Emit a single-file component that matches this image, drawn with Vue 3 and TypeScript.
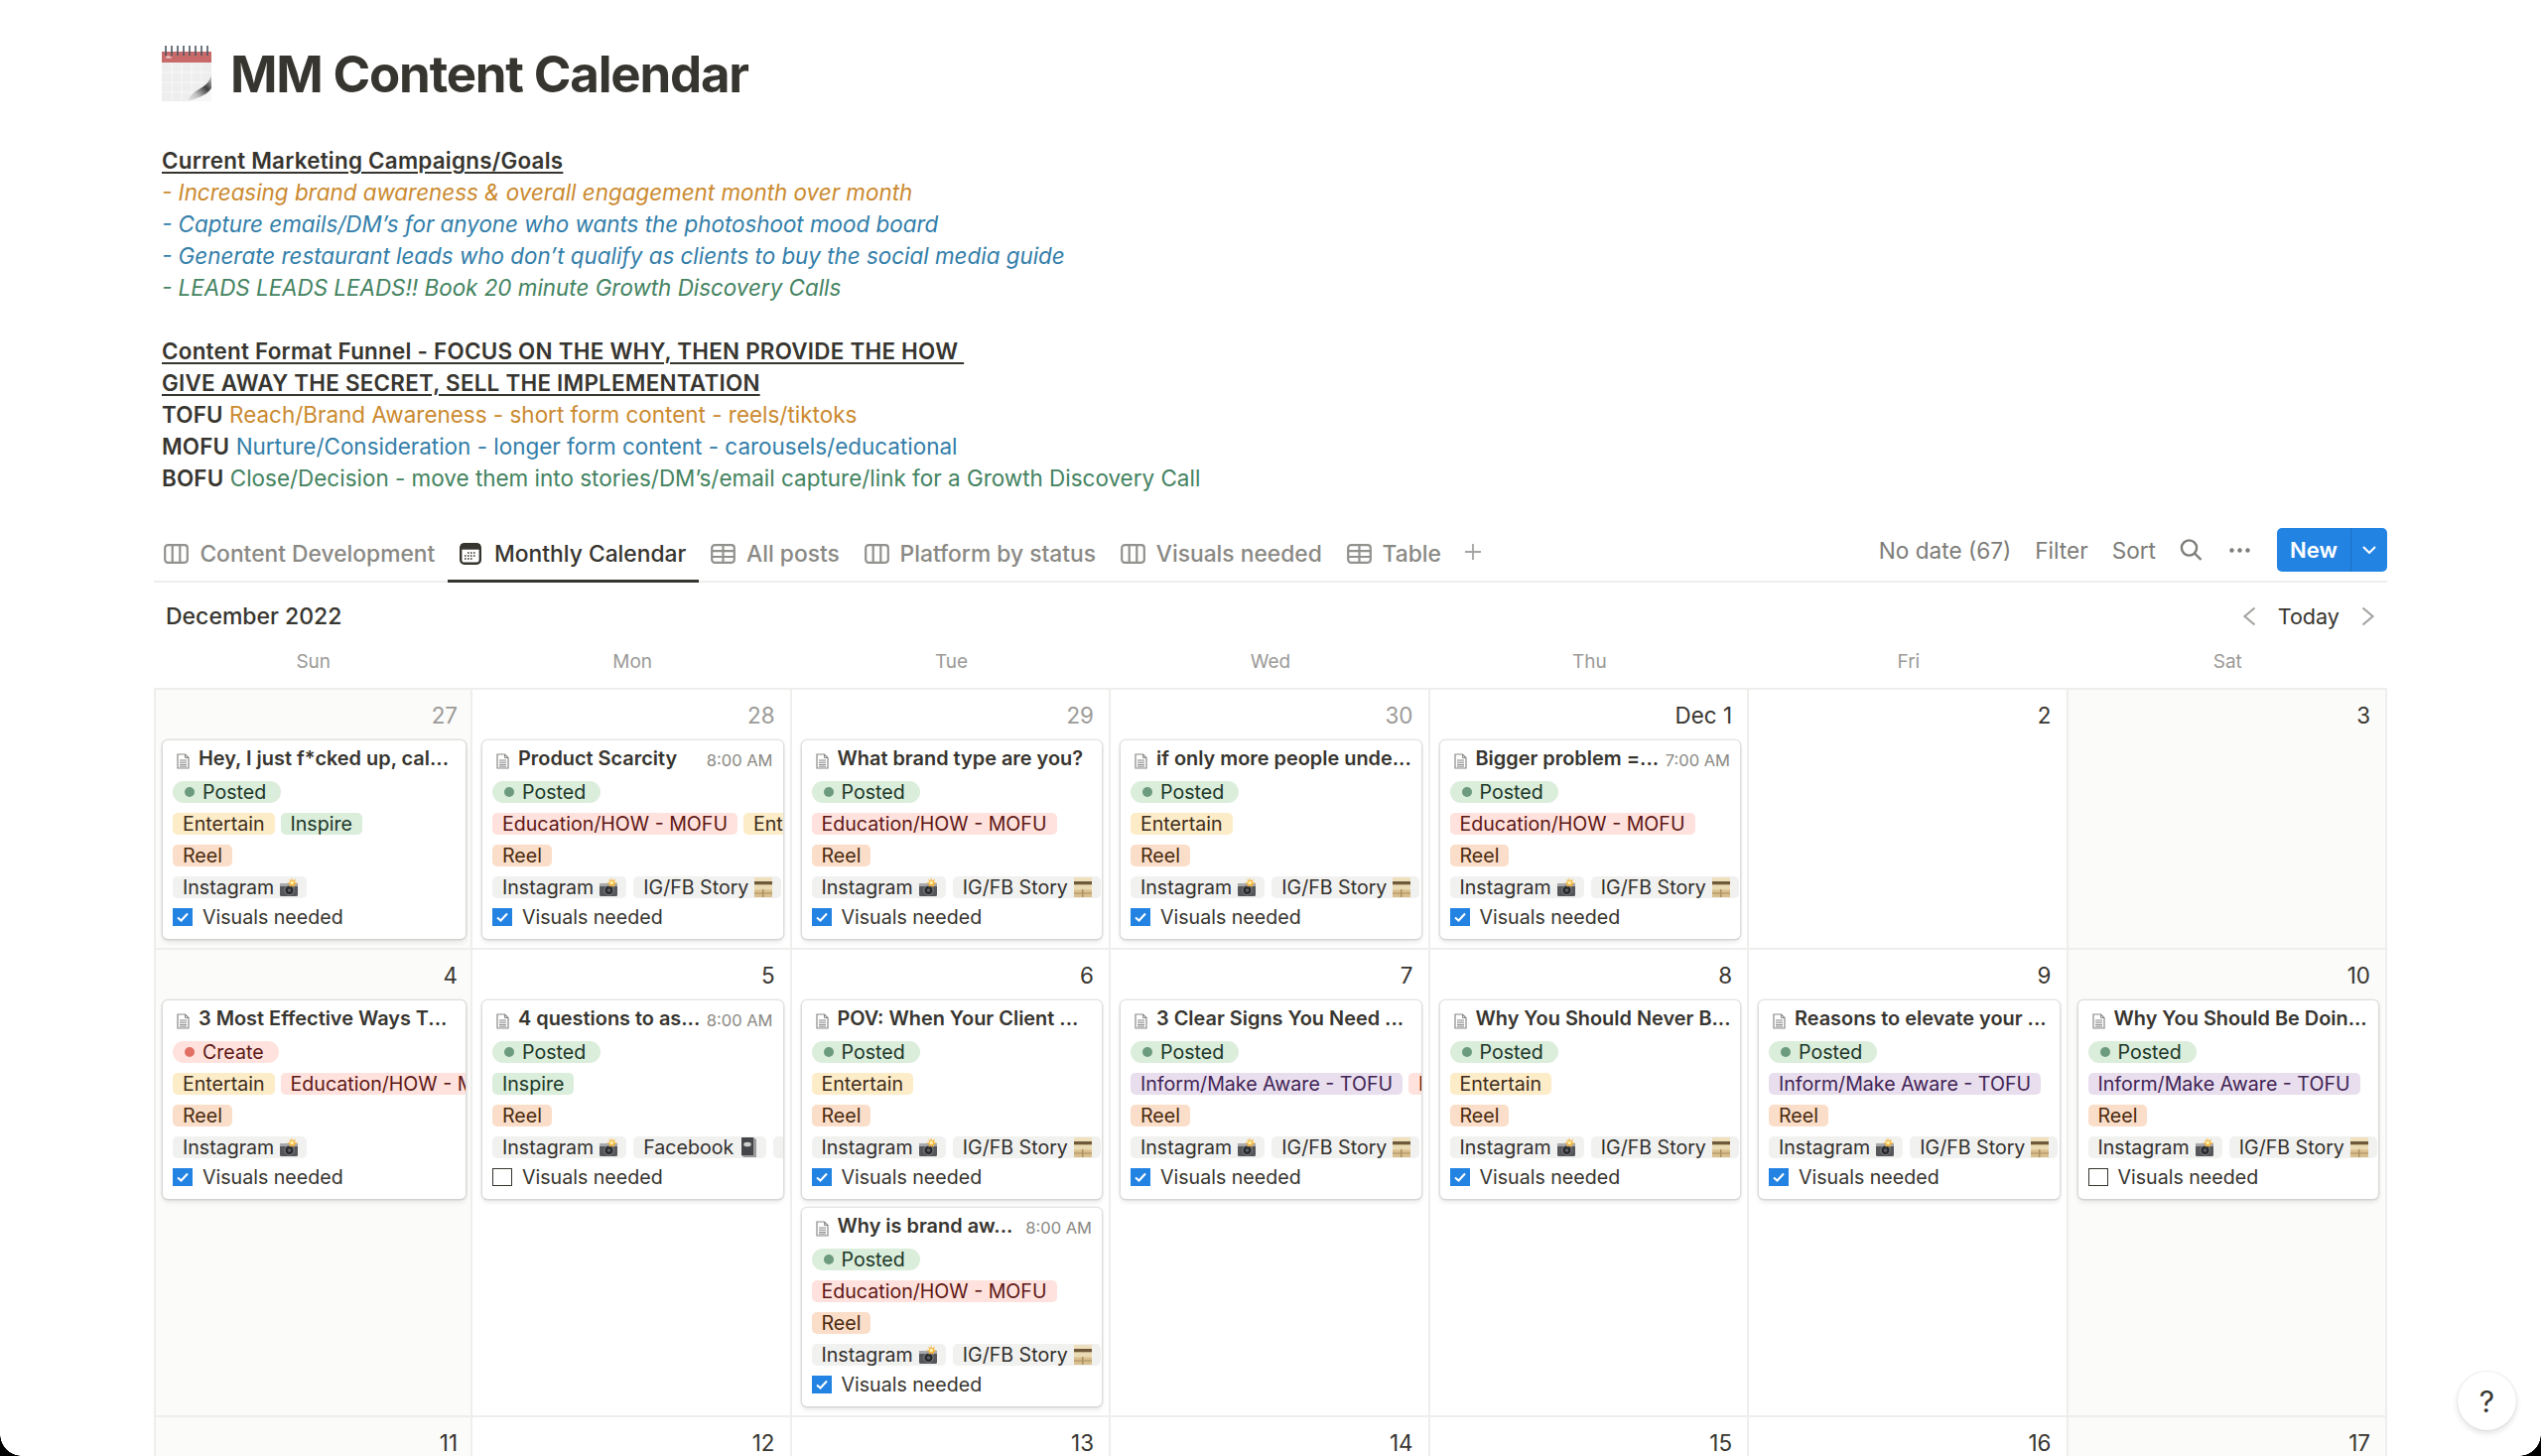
<script setup lang="ts">
// Notion-style calendar page: the rows of cells and the cards come from the data below.
type Color = 'green' | 'red' | 'yellow' | 'orange' | 'purple' | 'grey'

interface Tag {
  label: string
  color: Color
  icon?: 'camera' | 'box' | 'book'
}

interface Card {
  title: string
  time?: string
  status: 'Posted' | 'Create'
  pillars: Tag[]
  platforms: Tag[]
  checked: boolean
}

interface Cell {
  label: string
  muted?: boolean
  cards: Card[]
}

const entertain: Tag = { label: 'Entertain', color: 'yellow' }
const inspire: Tag = { label: 'Inspire', color: 'green' }
const education: Tag = { label: 'Education/HOW - MOFU', color: 'red' }
const inform: Tag = { label: 'Inform/Make Aware - TOFU', color: 'purple' }
const instagram: Tag = { label: 'Instagram', color: 'grey', icon: 'camera' }
const story: Tag = { label: 'IG/FB Story', color: 'grey', icon: 'box' }
const facebook: Tag = { label: 'Facebook', color: 'grey', icon: 'book' }

function card(
  title: string,
  pillars: Tag[],
  platforms: Tag[] = [instagram, story],
  extra: Partial<Card> = {},
): Card {
  return { title, pillars, platforms, status: 'Posted', checked: true, ...extra }
}

const weekdays = ['Sun', 'Mon', 'Tue', 'Wed', 'Thu', 'Fri', 'Sat']

const rows: Cell[][] = [
  [
    { label: '27', muted: true, cards: [card('Hey, I just f*cked up, cal...', [entertain, inspire], [instagram])] },
    { label: '28', muted: true, cards: [card('Product Scarcity', [education, entertain], undefined, { time: '8:00 AM' })] },
    { label: '29', muted: true, cards: [card('What brand type are you?', [education])] },
    { label: '30', muted: true, cards: [card('if only more people unde...', [entertain])] },
    { label: 'Dec 1', cards: [card('Bigger problem =...', [education], undefined, { time: '7:00 AM' })] },
    { label: '2', cards: [] },
    { label: '3', cards: [] },
  ],
  [
    { label: '4', cards: [card('3 Most Effective Ways T...', [entertain, education], [instagram], { status: 'Create' })] },
    { label: '5', cards: [card('4 questions to as...', [inspire], [instagram, facebook, story], { time: '8:00 AM', checked: false })] },
    {
      label: '6',
      cards: [
        card('POV: When Your Client ...', [entertain]),
        card('Why is brand aw...', [education], undefined, { time: '8:00 AM' }),
      ],
    },
    { label: '7', cards: [card('3 Clear Signs You Need ...', [inform, education])] },
    { label: '8', cards: [card('Why You Should Never B...', [entertain])] },
    { label: '9', cards: [card('Reasons to elevate your ...', [inform])] },
    { label: '10', cards: [card('Why You Should Be Doin...', [inform], undefined, { checked: false })] },
  ],
  ['11', '12', '13', '14', '15', '16', '17'].map((label) => ({ label, cards: [] })),
]

const tabs = [
  { label: 'Content Development', icon: 'board' },
  { label: 'Monthly Calendar', icon: 'calendar', active: true },
  { label: 'All posts', icon: 'table' },
  { label: 'Platform by status', icon: 'board' },
  { label: 'Visuals needed', icon: 'board' },
  { label: 'Table', icon: 'table' },
]
</script>

<template>
  <div class="page">
    <header class="title-row">
      <svg class="page-icon" viewBox="0 0 50 57" width="50" height="57">
        <defs>
          <linearGradient id="curl" gradientUnits="userSpaceOnUse" x1="25" y1="57" x2="50" y2="33">
            <stop offset="0" stop-color="#efefef" />
            <stop offset="0.35" stop-color="#bcbcbc" />
            <stop offset="0.68" stop-color="#3e3e3e" />
            <stop offset="1" stop-color="#c4c4c4" />
          </linearGradient>
        </defs>
        <rect x="0" y="8" width="50" height="49" fill="#eeeeee" />
        <rect x="0" y="7" width="50" height="11" fill="#c96a6a" />
        <g stroke="#fff" stroke-opacity="0.6" stroke-width="1">
          <path d="M0 28H50M0 38H50M0 48H50M10 18V57M20 18V57M30 18V57M40 18V57" />
        </g>
        <path d="M4 13H10M6 11V13M7 11V13" stroke="#f3dcdc" stroke-width="1" />
        <g stroke="#4c5560" stroke-width="1.6">
          <path d="M4 1V11M10 1V11M16 1V11M22 1V11M28 1V11M34 1V11M40 1V11M46 1V11" />
        </g>
        <path d="M50 40C46 48 36 54 25 57H50Z" fill="#f7f7f7" />
        <path d="M50 31C47 40 41 43 34 47C30 50 27 54 25 57C34 55 44 52 50 44Z" fill="url(#curl)" />
      </svg>
      <h1>MM Content Calendar</h1>
    </header>

    <section class="notes">
      <p class="head">Current Marketing Campaigns/Goals</p>
      <p class="orange"><em>- Increasing brand awareness &amp; overall engagement month over month</em></p>
      <p class="blue"><em>- Capture emails/DM’s for anyone who wants the photoshoot mood board</em></p>
      <p class="blue"><em>- Generate restaurant leads who don’t qualify as clients to buy the social media guide</em></p>
      <p class="green"><em>- LEADS LEADS LEADS!! Book 20 minute Growth Discovery Calls</em></p>
      <p>&nbsp;</p>
      <p class="head">Content Format Funnel - FOCUS ON THE WHY, THEN PROVIDE THE HOW&nbsp;</p>
      <p class="head">GIVE AWAY THE SECRET, SELL THE IMPLEMENTATION</p>
      <p><b>TOFU</b> <span class="orange">Reach/Brand Awareness - short form content - reels/tiktoks</span></p>
      <p><b>MOFU</b> <span class="blue">Nurture/Consideration - longer form content - carousels/educational</span></p>
      <p><b>BOFU</b> <span class="green">Close/Decision - move them into stories/DM’s/email capture/link for a Growth Discovery Call</span></p>
    </section>

    <nav class="toolbar">
      <div class="tabs">
        <div v-for="tab in tabs" :key="tab.label" class="tab" :class="{ active: tab.active }">
          <svg v-if="tab.icon === 'board'" class="tab-icon" viewBox="0 0 25 20" width="25" height="20">
            <rect x="1.2" y="1.2" width="22.6" height="17.6" rx="3" />
            <path d="M8.7 1.2V18.8M16.3 1.2V18.8" />
          </svg>
          <svg v-else-if="tab.icon === 'table'" class="tab-icon" viewBox="0 0 25 20" width="25" height="20">
            <rect x="1.2" y="1.2" width="22.6" height="17.6" rx="3" />
            <path d="M1.2 7.2H23.8M1.2 13H23.8M12.5 1.2V18.8" />
          </svg>
          <svg v-else class="cal-icon" viewBox="0 0 22 22" width="22" height="22">
            <rect x="1.2" y="1.2" width="19.6" height="19.6" rx="3.5" fill="#fff" stroke="#37352f" stroke-width="2.4" />
            <rect x="1.2" y="1.2" width="19.6" height="5.5" fill="#37352f" />
            <path
              d="M8 10h1.6M11 10h1.6M14 10h1.6M5 13h1.6M8 13h1.6M11 13h1.6M14 13h1.6M5 16h1.6M8 16h1.6M11 16h1.6"
              stroke="#37352f"
              stroke-width="1.6"
            />
          </svg>
          <span>{{ tab.label }}</span>
        </div>
        <svg class="plus" viewBox="0 0 18 18" width="18" height="18">
          <path d="M9 1V17M1 9H17" />
        </svg>
      </div>
      <div class="actions">
        <span class="action">No date (67)</span>
        <span class="action">Filter</span>
        <span class="action">Sort</span>
        <svg class="search" viewBox="0 0 23 22" width="23" height="22">
          <circle cx="9.5" cy="9" r="7.6" />
          <path d="M15 14.5L21.5 21" />
        </svg>
        <svg class="dots" viewBox="0 0 21 5" width="21" height="5">
          <circle cx="2.5" cy="2.5" r="2.2" />
          <circle cx="10.5" cy="2.5" r="2.2" />
          <circle cx="18.5" cy="2.5" r="2.2" />
        </svg>
        <div class="new-btn">
          <span class="new-label">New</span>
          <span class="new-caret">
            <svg viewBox="0 0 14 8" width="14" height="8"><path d="M1 1L7 7L13 1" /></svg>
          </span>
        </div>
      </div>
    </nav>

    <div class="month-row">
      <span class="month">December 2022</span>
      <div class="pager">
        <svg viewBox="0 0 14 20" width="14" height="20"><path d="M12.5 1.5L2.5 10L12.5 18.5" /></svg>
        <span>Today</span>
        <svg viewBox="0 0 14 20" width="14" height="20"><path d="M1.5 1.5L11.5 10L1.5 18.5" /></svg>
      </div>
    </div>

    <div class="weekdays">
      <span v-for="day in weekdays" :key="day">{{ day }}</span>
    </div>

    <div class="grid">
      <div v-for="(row, r) in rows" :key="r" class="week">
        <div
          v-for="(cell, c) in row"
          :key="cell.label"
          class="cell"
          :class="{ weekend: c === 0 || c === 6 }"
        >
          <div class="num" :class="{ muted: cell.muted }">{{ cell.label }}</div>
          <article v-for="item in cell.cards" :key="item.title" class="card">
            <div class="card-title">
              <svg class="doc" viewBox="0 0 13 16" width="13" height="16">
                <path d="M1 1H8.5L12 4.5V15H1Z" fill="#fff" stroke="#8a8986" stroke-width="1.2" />
                <path d="M8.5 1V4.5H12" fill="none" stroke="#8a8986" stroke-width="1" />
                <path d="M3 7H10M3 9.2H10M3 11.4H10M3 13.2H10" stroke="#77767a" stroke-width="0.9" />
              </svg>
              <span class="name">{{ item.title }}</span>
              <span v-if="item.time" class="time">{{ item.time }}</span>
            </div>
            <div class="tag-row">
              <span class="status" :class="item.status === 'Posted' ? 'tag-green' : 'tag-red'">
                <i class="dot"></i>{{ item.status }}
              </span>
            </div>
            <div class="tag-row">
              <span v-for="tag in item.pillars" :key="tag.label" class="tag" :class="`tag-${tag.color}`">{{ tag.label }}</span>
            </div>
            <div class="tag-row">
              <span class="tag tag-orange">Reel</span>
            </div>
            <div class="tag-row platforms">
              <span v-for="tag in item.platforms" :key="tag.label" class="tag tag-grey">
                {{ tag.label }}
                <svg v-if="tag.icon === 'camera'" class="emoji" viewBox="0 0 20 20" width="20" height="20">
                  <rect x="1" y="6" width="18" height="13" rx="1.5" fill="#55565a" />
                  <rect x="1" y="6" width="18" height="3" fill="#a9a9ab" />
                  <circle cx="10.5" cy="13" r="4.6" fill="#26272a" stroke="#87888b" stroke-width="1" />
                  <circle cx="10.5" cy="13" r="1.8" fill="#5d6066" />
                  <path d="M13 0L14 3.5L17 1.5L15.8 5L19 5.5L15.5 7.5L16 10L13 8.2L10.6 10L11 7L8 5.6L11.2 5L10.3 1.5L12.2 3.4Z" fill="#f5b63f" />
                  <circle cx="13.2" cy="5.4" r="1.7" fill="#fff2b0" />
                </svg>
                <svg v-else-if="tag.icon === 'box'" class="emoji" viewBox="0 0 20 20" width="20" height="20">
                  <rect x="1" y="0" width="18" height="20" fill="#d9bf8d" />
                  <rect x="1" y="0" width="18" height="4" fill="#efe0bd" />
                  <rect x="1" y="4" width="18" height="3.5" fill="#6e5a3a" />
                  <rect x="1" y="7.5" width="18" height="5" fill="#eadbb4" />
                  <rect x="1" y="15.5" width="18" height="1" fill="#a88f5f" />
                  <rect x="9" y="12" width="1.4" height="8" fill="#a88f5f" />
                </svg>
                <svg v-else-if="tag.icon === 'book'" class="emoji" viewBox="0 0 20 20" width="20" height="20">
                  <path d="M3 0H15L18 2V20H5L3 18Z" fill="#9b9b9b" />
                  <path d="M3 0H15V18H3Z" fill="#45464a" />
                  <ellipse cx="9" cy="7" rx="3.8" ry="2.3" fill="#cfcfcf" />
                </svg>
              </span>
            </div>
            <div class="check-row">
              <span class="box" :class="{ on: item.checked }">
                <svg v-if="item.checked" viewBox="0 0 14 12" width="14" height="12"><path d="M2 6.5L5.5 9.5L12 2.5" /></svg>
              </span>
              <span>Visuals needed</span>
            </div>
          </article>
        </div>
      </div>
    </div>

    <button class="help">?</button>
    <i class="corner left"></i>
    <i class="corner right"></i>
  </div>
</template>

<style>
html,
body {
  margin: 0;
  height: 100%;
  overflow: hidden;
  background: #fff;
}
</style>

<style scoped>
.page {
  position: relative;
  height: 1467px;
  overflow: hidden;
  box-sizing: border-box;
  padding: 0 155px;
  font-family: Inter, 'Liberation Sans', sans-serif;
  color: #37352f;
  background: #fff;
}
.title-row {
  display: flex;
  align-items: center;
  gap: 19px;
  height: 57px;
  padding: 45px 0 0 8px;
}
.page-icon {
  flex: none;
}
h1 {
  margin: 2px 0 0;
  font-size: 51px;
  font-weight: 700;
  line-height: 60px;
  letter-spacing: -1.2px;
}
.notes {
  margin-top: 44px;
  padding-left: 8px;
  font-size: 22.4px;
  line-height: 32px;
}
.notes p {
  margin: 0;
  white-space: nowrap;
}
.notes span {
  font-size: 22.46px;
}
.notes .head {
  font-weight: 600;
  letter-spacing: 0.25px;
  text-decoration: underline;
  text-underline-offset: 3px;
}
.notes b {
  font-weight: 600;
  letter-spacing: 0.2px;
}
.notes .orange {
  color: #cb8a2f;
}
.notes .blue {
  color: #337ea9;
}
.notes .green {
  color: #448361;
}
.toolbar {
  display: flex;
  justify-content: space-between;
  align-items: stretch;
  height: 57px;
  margin-top: 30px;
  border-bottom: 2px solid #eeeeed;
}
.tabs {
  display: flex;
  align-items: stretch;
  margin-left: -2px;
}
.tab {
  display: flex;
  align-items: center;
  gap: 11px;
  padding: 3px 12.4px 0;
  margin-bottom: -2px;
  font-size: 22.8px;
  font-weight: 500;
  color: #8a8984;
  border-bottom: 3px solid transparent;
  box-sizing: border-box;
}
.tab.active {
  color: #37352f;
  border-bottom-color: #37352f;
}
.tab-icon {
  fill: none;
  stroke: #91918e;
  stroke-width: 2.2;
}
.cal-icon {
  margin-right: 2px;
}
.plus {
  align-self: center;
  margin: -2px 0 0 11px;
  fill: none;
  stroke: #a5a4a1;
  stroke-width: 1.8;
}
.actions {
  display: flex;
  align-items: center;
  padding-bottom: 5px;
}
.action {
  margin-right: 24px;
  font-size: 22.6px;
  color: #7d7c78;
}
.search {
  margin-right: 27px;
  fill: none;
  stroke: #7d7c78;
  stroke-width: 2.4;
}
.dots {
  margin-right: 27px;
  fill: #7d7c78;
}
.new-btn {
  display: flex;
  height: 44px;
  border-radius: 5px;
  overflow: hidden;
  background: #2383e2;
  color: #fff;
}
.new-label {
  display: flex;
  align-items: center;
  justify-content: center;
  width: 74px;
  font-size: 22px;
  font-weight: 600;
  border-right: 1px solid #1b6fc4;
}
.new-caret {
  display: flex;
  align-items: center;
  justify-content: center;
  width: 36px;
}
.new-caret path {
  fill: none;
  stroke: #fff;
  stroke-width: 2;
}
.month-row {
  display: flex;
  justify-content: space-between;
  align-items: center;
  height: 68px;
  padding: 0 12px;
}
.month {
  font-size: 23px;
  font-weight: 500;
}
.pager {
  display: flex;
  align-items: center;
  gap: 22px;
  font-size: 21.6px;
}
.pager path {
  fill: none;
  stroke: #a5a4a1;
  stroke-width: 2.2;
}
.weekdays {
  display: grid;
  grid-template-columns: repeat(7, 1fr);
  height: 38px;
  font-size: 19px;
  color: #9b9a97;
  text-align: center;
  line-height: 24px;
}
.grid {
  border-top: 2px solid #eeeeed;
  border-left: 2px solid #eeeeed;
}
.week {
  display: grid;
  grid-template-columns: 319px repeat(6, 1fr);
  border-bottom: 2px solid #eeeeed;
}
.cell {
  min-width: 0;
  box-sizing: border-box;
  padding: 0 7px 0 10px;
  border-right: 2px solid #eeeeed;
  min-height: 260px;
}
.cell:first-child {
  padding: 0 5px 0 7px;
}
.cell.weekend {
  background: #fbfbfa;
}
.num {
  height: 51px;
  padding: 14px 8px 0 0;
  box-sizing: border-box;
  text-align: right;
  font-size: 22.4px;
  line-height: 24px;
}
.num.muted {
  color: #9b9a97;
}
.card {
  box-sizing: border-box;
  height: 200px;
  margin-bottom: 9px;
  padding: 6px 0 0 10px;
  overflow: hidden;
  background: #fff;
  border-radius: 5px;
  box-shadow: 0 0 0 1.5px rgba(15, 15, 15, 0.1), 0 3px 5px rgba(15, 15, 15, 0.1);
  font-size: 19.6px;
}
.card-title {
  display: flex;
  align-items: center;
  height: 24px;
  padding-right: 10px;
  margin-bottom: 11px;
  font-size: 19.9px;
  font-weight: 600;
  white-space: nowrap;
}
.doc {
  flex: none;
  margin: 5px 9px 0 4px;
}
.name {
  flex: 1;
  min-width: 0;
  overflow: hidden;
}
.time {
  flex: none;
  margin: 3px 0 0 6px;
  font-size: 16.5px;
  font-weight: 400;
  color: #8a8984;
}
.tag-row {
  display: flex;
  gap: 6px;
  height: 22px;
  margin-bottom: 10px;
  white-space: nowrap;
}
.tag-row.platforms {
  gap: 7px;
}
.tag,
.status {
  flex: none;
  display: inline-flex;
  align-items: center;
  height: 22px;
  line-height: 22px;
}
.tag {
  padding: 0 10px;
  border-radius: 5px;
}
.tag-grey {
  padding-right: 8px;
}
.status {
  padding: 0 15px 0 12px;
  border-radius: 11px;
}
.dot {
  width: 10px;
  height: 10px;
  margin-right: 8px;
  border-radius: 50%;
  background: #6c9b7d;
}
.status.tag-red .dot {
  background: #e16f64;
}
.tag-green {
  background: #dbeddb;
  color: #1c3829;
}
.tag-red {
  background: #ffe2dd;
  color: #5d1715;
}
.tag-yellow {
  background: #fdecc8;
  color: #402c1b;
}
.tag-orange {
  background: #fadec9;
  color: #49290e;
}
.tag-purple {
  background: #e8deee;
  color: #412454;
}
.tag-grey {
  background: #f1f1f0;
  color: #32302c;
}
.emoji {
  flex: none;
  margin-left: 5px;
}
.check-row {
  display: flex;
  align-items: center;
  margin-top: -3px;
  height: 24px;
}
.box {
  flex: none;
  display: flex;
  align-items: center;
  justify-content: center;
  box-sizing: border-box;
  width: 20px;
  height: 18px;
  margin-right: 10px;
  border: 1.5px solid #37352f;
}
.box.on {
  border: none;
  background: #2383e2;
}
.box path {
  fill: none;
  stroke: #fff;
  stroke-width: 2;
}
.help {
  position: absolute;
  left: 2476px;
  top: 1382px;
  width: 59px;
  height: 59px;
  padding: 0;
  border: none;
  border-radius: 50%;
  background: #fff;
  box-shadow: 0 0 0 1px rgba(15, 15, 15, 0.05), 0 3px 6px rgba(15, 15, 15, 0.12);
  font-family: Inter, sans-serif;
  font-size: 30px;
  color: #37352f;
}
.corner {
  position: absolute;
  bottom: 0;
  width: 22px;
  height: 22px;
}
.corner.left {
  left: 0;
  background: radial-gradient(circle at 100% 0, transparent 21.5px, #000 22px);
}
.corner.right {
  right: 0;
  background: radial-gradient(circle at 0 0, transparent 21.5px, #000 22px);
}
</style>
